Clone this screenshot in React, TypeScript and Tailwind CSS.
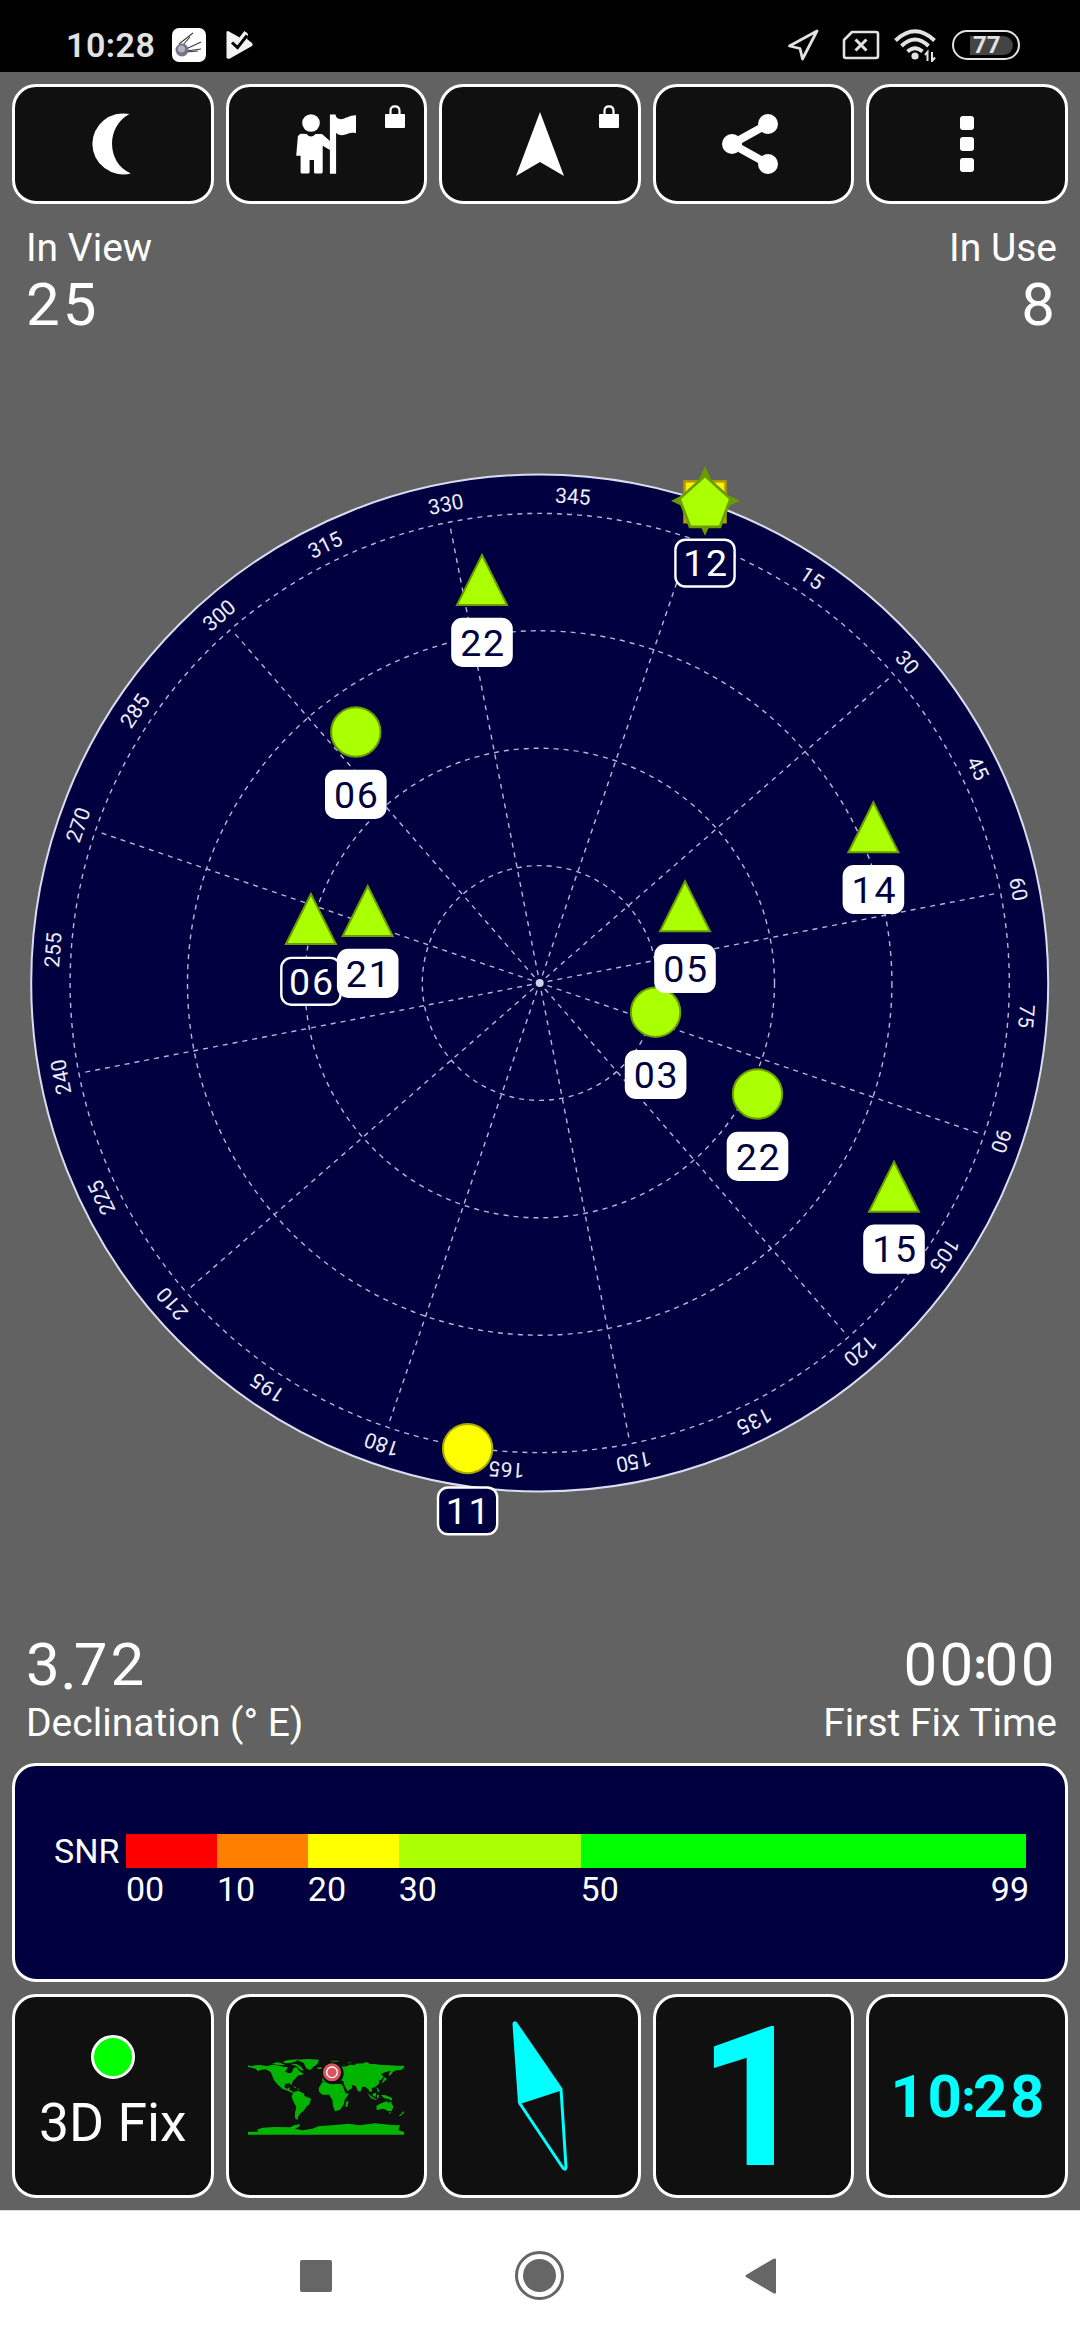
import type { ReactNode } from "react";

const CENTER = { x: 539.7, y: 983 };
const NORTH = 18.9;
const RING_STEP = 117.4;

type Satellite = {
  id: string;
  x: number;
  y: number;
  shape: "triangle" | "circle" | "pentagon";
  color?: string;
  inUse: boolean;
};

// painted in this order, later ones lie on top
const satellites: Satellite[] = [
  { id: "22", x: 482, y: 580, shape: "triangle", inUse: true },
  { id: "06", x: 355.8, y: 732, shape: "circle", inUse: true },
  { id: "06", x: 310.9, y: 919, shape: "triangle", inUse: false },
  { id: "21", x: 367.7, y: 911, shape: "triangle", inUse: true },
  { id: "12", x: 705, y: 500.8, shape: "pentagon", inUse: false },
  { id: "14", x: 873.4, y: 827.2, shape: "triangle", inUse: true },
  { id: "03", x: 655.6, y: 1012.2, shape: "circle", inUse: true },
  { id: "05", x: 685, y: 906.2, shape: "triangle", inUse: true },
  { id: "22", x: 757.5, y: 1094, shape: "circle", inUse: true },
  { id: "15", x: 894, y: 1186.8, shape: "triangle", inUse: true },
  { id: "11", x: 467.6, y: 1448.6, shape: "circle", color: "#ffff00", inUse: false },
];

const snr = [
  { label: "00", span: 10, color: "bg-[#ff0000]" },
  { label: "10", span: 10, color: "bg-[#ff8000]" },
  { label: "20", span: 10, color: "bg-[#ffff00]" },
  { label: "30", span: 20, color: "bg-[#aaff00]" },
  { label: "50", span: 49, color: "bg-[#00ff00]" },
];

function StatusBar() {
  return (
    <header className="flex h-[72px] items-center bg-black pr-[60px] pl-[66px] pt-[18px] text-[#e2e2e2]">
      <span className="text-[34px] leading-[40px] font-semibold tracking-[0.5px]">10:28</span>
      <svg className="ml-[17px] h-[34px] w-[34px]" viewBox="0 0 34 34">
        <rect width="34" height="34" rx="7" fill="#fff" />
        <g stroke="#3c3848" strokeWidth="1.1">
          <path d="M7 16 21 5M11 17 18 9M14 21 29 14M14 23 29 21M14 24 26 23" />
        </g>
        <circle cx="10" cy="22" r="6.5" fill="#77728a" />
        <circle cx="9.5" cy="21" r="3.5" fill="#b4b0c4" />
      </svg>
      <svg className="ml-[20px] h-[30px] w-[28px]" viewBox="0 0 28 30">
        <path d="M0.5 1.5 L2 1 L12 6.5 L15 9 L20 2 L22 4 L21 9 L26 13 Q27.5 14.5 26 16 L3 29 L0.5 28Z" fill="#f2f2f2" />
        <path d="M6 12.5 L11.5 17.5 L21 5.5" fill="none" stroke="#000" strokeWidth="3" />
        <path d="M8 9 L11.5 12.5 L19.5 2" fill="none" stroke="#f2f2f2" strokeWidth="3" />
      </svg>

      <div className="ml-auto flex items-center">
        <svg className="h-[34px] w-[32px]" viewBox="0 0 32 34" fill="none" stroke="#e2e2e2" strokeWidth="2.8" strokeLinejoin="round">
          <path d="M2.5 18 L30 3 L15.5 31 L13 20.5Z" />
        </svg>
        <svg className="ml-[23px] h-[30px] w-[38px]" viewBox="0 0 38 30" fill="none" stroke="#e2e2e2" strokeWidth="2.6" strokeLinejoin="round">
          <path d="M10 2 H34 Q36 2 36 4 V26 Q36 28 34 28 H4 Q2 28 2 26 V10Z" />
          <path d="M13.5 9.5 L24.5 20.5 M24.5 9.5 L13.5 20.5" strokeWidth="3" />
        </svg>
        <svg className="ml-[13px] h-[34px] w-[44px]" viewBox="0 0 44 34" fill="none" stroke="#e2e2e2" strokeWidth="4">
          <path d="M2.5 12.5 Q22 -6 41.5 12.5" />
          <path d="M8.5 18 Q22 5 35.5 18" />
          <path d="M14.5 23.5 Q22 17 29.5 23.5" />
          <circle cx="22" cy="28" r="3.6" fill="#e2e2e2" stroke="none" />
          <path d="M34.5 33 V24 L32 27 M39 24 V33 L42 29.5" strokeWidth="2" />
        </svg>
        <div className="ml-[15px] flex h-[30px] w-[68px] items-center rounded-full border-[2.5px] border-[#e2e2e2] pl-[16px]">
          <span className="flex h-[19px] w-[43px] items-center rounded-r-[10px] bg-[#444] pl-[3px] text-[24px] leading-none font-bold">
            77
          </span>
        </div>
      </div>
    </header>
  );
}

function Tile({ children, className }: { children: ReactNode; className: string }) {
  return (
    <button
      className={`relative flex flex-1 items-center justify-center rounded-[24px] border-[3px] border-white bg-[#101010] ${className}`}
    >
      {children}
    </button>
  );
}

function Lock() {
  return (
    <svg className="absolute top-[18px] right-[19px] h-[23px] w-[20px]" viewBox="0 0 20 23">
      <rect y="9" width="20" height="14" rx="1" fill="#fff" />
      <path d="M5.5 10 V6 Q5.5 1.3 10 1.3 T14.5 6 V10" fill="none" stroke="#fff" strokeWidth="2.2" />
    </svg>
  );
}

function Toolbar() {
  return (
    <nav className="mt-3 flex gap-3 px-3">
      <Tile className="h-[120px]">
        <svg className="mr-[1px] h-[62px] w-[40px]" viewBox="0 0 40 62">
          <path d="M37.5 1 A31 30.5 0 1 0 38.8 60.5 C14 50 14 13 37.5 1Z" fill="#fff" />
        </svg>
      </Tile>
      <Tile className="h-[120px]">
        <svg className="h-[60px] w-[60px]" viewBox="0 0 60 60" fill="#fff">
          <circle cx="15" cy="9" r="8.8" />
          <path d="M4.5 19.8 L10.5 20 Q15 25 19.5 20 L26 20 L33.9 27 V36 L26.7 31.7 V58 Q26.7 59.5 25 59.5 H19.5 Q18 59.5 18 58 V46 H13.6 V58 Q13.6 59.5 12 59.5 H6 Q4.6 59.5 4.6 58 V41.7 H0.2 L1.9 22Z" />
          <path d="M33.9 0.5 H39.5 L40.1 2.7 C46 9 51 1 60 1.3 V19.3 C52 17 47 25 40.1 18.7 V59.7 H33.9Z" />
        </svg>
        <Lock />
      </Tile>
      <Tile className="h-[120px]">
        <svg className="h-[64px] w-[48px]" viewBox="0 0 48 64">
          <path d="M24 0 L48 64 L24 50 L0 64Z" fill="#fff" />
        </svg>
        <Lock />
      </Tile>
      <Tile className="h-[120px]">
        <svg className="mr-[8px] h-[60px] w-[58px]" viewBox="0 0 58 60" fill="#fff" stroke="#fff">
          <path d="M47 10 L11 30 L47 50" fill="none" strokeWidth="8" />
          <circle cx="11" cy="30" r="10" stroke="none" />
          <circle cx="47" cy="10" r="10" stroke="none" />
          <circle cx="47" cy="50" r="10" stroke="none" />
        </svg>
      </Tile>
      <Tile className="h-[120px] flex-col gap-[7px]">
        <span className="h-[14px] w-[14px] rounded-[3px] bg-white" />
        <span className="h-[14px] w-[14px] rounded-[3px] bg-white" />
        <span className="h-[14px] w-[14px] rounded-[3px] bg-white" />
      </Tile>
    </nav>
  );
}

function Marker({ id, x, y, shape, color = "#aaff00", inUse }: Satellite) {
  const stroke = color === "#aaff00" ? "#6a9c00" : "#a8a800";
  return (
    <g transform={`translate(${x} ${y})`}>
      {shape === "triangle" && <path d="M0 -25 L25 25 H-25Z" fill={color} stroke={stroke} strokeWidth="2" />}
      {shape === "circle" && <circle r="24.7" fill={color} stroke={stroke} strokeWidth="2" />}
      {shape === "pentagon" && (
        <>
          <rect x="-20.5" y="-19.5" width="41" height="41" fill="#ffee00" stroke="#b09a00" strokeWidth="2.5" />
          <path d="M0 -34.5 L11 -11 L35 0 L11 11 L0 35 L-11 11 L-34 0 L-11 -11Z" fill="#6a9c00" />
          <path d="M0 -25 L25.5 -2 L15 26 H-15 L-25.5 -2Z" fill={color} stroke="#6a9c00" strokeWidth="2.8" />
        </>
      )}
      <rect
        x="-29.6"
        y="38.9"
        width="59.2"
        height="46.8"
        rx="10"
        fill={inUse ? "#fff" : "#000040"}
        stroke="#fff"
        strokeWidth="2.4"
      />
      <text
        x="1"
        y="75.7"
        textAnchor="middle"
        fontSize="37.5"
        letterSpacing="1.8"
        fill={inUse ? "#000040" : "#fff"}
      >
        {id}
      </text>
    </g>
  );
}

function SkyView() {
  const bearings = Array.from({ length: 23 }, (_, i) => (i + 1) * 15);
  const rays = Array.from({ length: 12 }, (_, i) => i * 30);
  return (
    <svg className="h-[1300px] w-full shrink-0" viewBox="0 335 1080 1300">
      <g transform={`translate(${CENTER.x} ${CENTER.y})`}>
        <circle r="508.5" fill="#000040" stroke="#dcdcf0" strokeWidth="2" />
        <g fill="none" stroke="#b4b4dc" strokeWidth="1.4" strokeDasharray="5 5">
          {[1, 2, 3, 4].map((n) => (
            <circle key={n} r={n * RING_STEP} />
          ))}
          {rays.map((deg) => (
            <path key={deg} d="M0 -8 V-465" transform={`rotate(${deg + NORTH})`} />
          ))}
        </g>
        <circle r="4" fill="#d0d0e8" />
        {bearings.map((deg) => (
          <text
            key={deg}
            y="-480.5"
            transform={`rotate(${deg + NORTH})`}
            textAnchor="middle"
            fontSize="21"
            fill="#ececfa"
          >
            {deg}
          </text>
        ))}
      </g>
      {satellites.map((s, i) => (
        <Marker key={i} {...s} />
      ))}
    </svg>
  );
}

function SnrPanel() {
  return (
    <section className="mx-3 mt-[18px] flex h-[219px] rounded-[24px] border-[3px] border-white bg-[#000040] pt-[68px] pr-[39px] pl-[39px] text-[34px] leading-[34px]">
      <span className="w-[72px]">SNR</span>
      <div className="flex-1">
        <div className="flex h-[34px]">
          {snr.map((s) => (
            <span key={s.label} className={s.color} style={{ flex: `${s.span} 0 0` }} />
          ))}
        </div>
        <div className="relative flex pt-[4px]">
          {snr.map((s) => (
            <span key={s.label} style={{ flex: `${s.span} 0 0` }}>
              {s.label}
            </span>
          ))}
          <span className="absolute -right-[3px]">99</span>
        </div>
      </div>
    </section>
  );
}

function WorldMap() {
  return (
    <svg className="mt-[2px] h-[78px] w-[156px]" viewBox="39 40 468 234">
      <g fill="#00b400">
        <path d="M39 62 L50 65 L60 62 L75 61 L95 64 L112 61 L128 62 L145 66 L158 68 L155 75 L150 80 L160 86 L170 84 L176 70 L184 67 L192 78 L206 87 L198 92 L190 92 L182 101 L173 110 L169 122 L164 116 L150 118 L148 127 L155 133 L163 127 L164 136 L176 142 L170 144 L158 138 L143 133 L130 122 L118 108 L112 94 L107 82 L92 74 L80 75 L68 79 L62 72 L50 69 L39 67Z" />
        <path d="M110 58 L125 53 L140 56 L150 61 L132 61Z M145 50 L160 46 L190 44 L180 52 L160 56 L148 55Z M165 57 L185 58 L200 68 L206 78 L196 76 L184 64Z M172 125 L184 128 L182 131Z M184 132 L194 132 L190 135Z" />
        <path d="M185 45 L220 43 L252 45 L247 58 L235 67 L225 77 L214 71 L206 55Z M246 69 L260 67 L258 73 L248 73Z" />
        <path d="M174 143 L190 138 L205 146 L210 155 L228 162 L224 178 L214 186 L205 200 L197 205 L190 215 L188 226 L180 221 L180 205 L184 187 L177 174 L170 158Z" />
        <path d="M251 130 L262 113 L290 112 L300 117 L320 119 L325 128 L331 146 L342 147 L329 165 L326 180 L315 195 L300 200 L294 185 L292 165 L282 150 L262 150 L252 141Z M333 172 L341 168 L337 186 L331 187Z" />
        <path d="M262 101 L275 98 L285 80 L300 65 L320 66 L335 65 L345 60 L360 62 L362 57 L385 56 L395 52 L405 58 L418 58 L440 61 L465 62 L490 63 L507 63 L507 69 L498 76 L484 77 L474 81 L464 94 L461 88 L468 78 L452 82 L438 88 L446 96 L438 107 L431 105 L433 116 L420 128 L410 130 L412 139 L404 142 L400 134 L391 127 L382 126 L376 142 L368 138 L362 124 L350 120 L352 130 L338 139 L329 124 L325 110 L312 104 L300 110 L290 104 L275 111 L262 111Z" />
        <path d="M448 98 L456 102 L446 112 L440 116Z M396 144 L412 157 L426 165 L424 167 L408 161Z M412 147 L424 144 L422 157 L414 154Z M426 150 L432 150 L430 162 L426 160Z M424 128 L430 132 L434 144 L428 140Z M438 150 L452 152 L470 159 L472 168 L460 163 L446 160Z" />
        <path d="M424 184 L435 177 L446 173 L456 170 L462 176 L466 169 L475 186 L470 200 L458 199 L446 192 L425 196Z M462 203 L468 203 L465 209Z M491 214 L500 206 L505 199 L508 203 L496 214Z" />
        <path d="M39 261 L70 261 L66 255 L82 249 L120 247 L165 248 L178 242 L195 238 L192 246 L180 252 L202 257 L232 252 L250 245 L300 241 L340 237 L372 242 L420 236 L470 241 L495 242 L490 257 L507 261 L507 270 L39 270Z" />
      </g>
      <path d="M286 48 L312 48 L308 52 L292 52Z M336 56 L350 50 L346 56Z" fill="#087a08" />
      <circle cx="293" cy="86" r="33" fill="#101010" />
      <circle cx="291" cy="83" r="27" fill="#d9545c" />
      <circle cx="291" cy="83" r="16" fill="none" stroke="#fff" strokeWidth="4" />
    </svg>
  );
}

function BottomTiles() {
  return (
    <nav className="mt-3 flex gap-3 px-3">
      <Tile className="h-[204px] flex-col">
        <span className="mt-[20px] h-[44px] w-[44px] rounded-full border-[3.5px] border-white bg-[#00ff00]" />
        <span className="mt-[13px] mb-[23px] text-[53.5px] leading-[62px] whitespace-nowrap">3D Fix</span>
      </Tile>
      <Tile className="h-[204px]">
        <WorldMap />
      </Tile>
      <Tile className="h-[204px]">
        <svg className="h-[152px] w-[60px]" viewBox="0 0 60 152" stroke="#00ffff" strokeLinejoin="round">
          <path d="M6 3.5 L51 69 L9.5 82.5 L4 4 Q4 2 6 3.5Z" fill="#00ffff" strokeWidth="3" />
          <path d="M9.5 83 L53 148 Q56 151 56 147 L51 69" fill="none" strokeWidth="3" />
        </svg>
      </Tile>
      <Tile className="h-[204px] text-[#00ffff]">
        <span className="mt-[6px] text-[194px] leading-[190px] font-bold">1</span>
      </Tile>
      <Tile className="h-[204px] text-[#00ffff]">
        <span className="flex items-center pt-[1px] pl-[3px] text-[60px] leading-[60px] font-bold tracking-[2.5px]">
          10
          <span className="-mx-[1px] text-[38px] tracking-normal [-webkit-text-stroke:2px_#00ffff]">:</span>
          28
        </span>
      </Tile>
    </nav>
  );
}

function SystemNav() {
  return (
    <footer className="mt-3 flex h-[130px] items-center justify-center border-t border-[#dcdcdc] bg-white pr-[4px]">
      <span className="h-[32px] w-[32px] rounded-[2px] bg-[#666]" />
      <span className="mr-[181px] ml-[183px] flex h-[49px] w-[49px] items-center justify-center rounded-full border-[3.5px] border-[#666]">
        <span className="h-[33px] w-[33px] rounded-full bg-[#666]" />
      </span>
      <svg className="h-[36px] w-[31px]" viewBox="0 0 31 36">
        <path d="M31 1 V35 Q30 36 28 35 L1 19 Q0 18 1 17 L28 1 Q30 0 31 1Z" fill="#666" />
      </svg>
    </footer>
  );
}

export default function App() {
  return (
    <div className="flex h-[2340px] w-[1080px] flex-col overflow-hidden bg-[#626262] font-['Roboto',sans-serif] text-white">
      <StatusBar />
      <Toolbar />

      <div className="flex justify-between pt-[22px] pr-[23px] pl-[26px]">
        <div className="flex flex-col gap-[5px]">
          <span className="text-[39px] leading-[44px]">In View</span>
          <span className="text-[60px] leading-[60px] tracking-[3px]">25</span>
        </div>
        <div className="flex flex-col items-end gap-[5px]">
          <span className="text-[39px] leading-[44px]">In Use</span>
          <span className="pr-[2px] text-[60px] leading-[60px]">8</span>
        </div>
      </div>

      <SkyView />

      <div className="flex justify-between pr-[23px] pl-[26px]">
        <div className="flex flex-col gap-[6px]">
          <span className="h-[60px] text-[60px] leading-[60px] tracking-[3px]">
            3
            <span className="relative top-[4px] text-[38px] leading-none font-bold tracking-normal [-webkit-text-stroke:1px_white]">
              .
            </span>
            72
          </span>
          <span className="text-[39px] leading-[44px]">Declination (° E)</span>
        </div>
        <div className="flex flex-col items-end gap-[6px]">
          <span className="flex h-[60px] items-center text-[60px] leading-[60px] tracking-[2.5px]">
            00
            <span className="-mx-[1px] text-[38px] font-bold tracking-normal [-webkit-text-stroke:1.5px_white]">:</span>
            00
          </span>
          <span className="text-[39px] leading-[44px]">First Fix Time</span>
        </div>
      </div>

      <SnrPanel />
      <BottomTiles />
      <SystemNav />
    </div>
  );
}
